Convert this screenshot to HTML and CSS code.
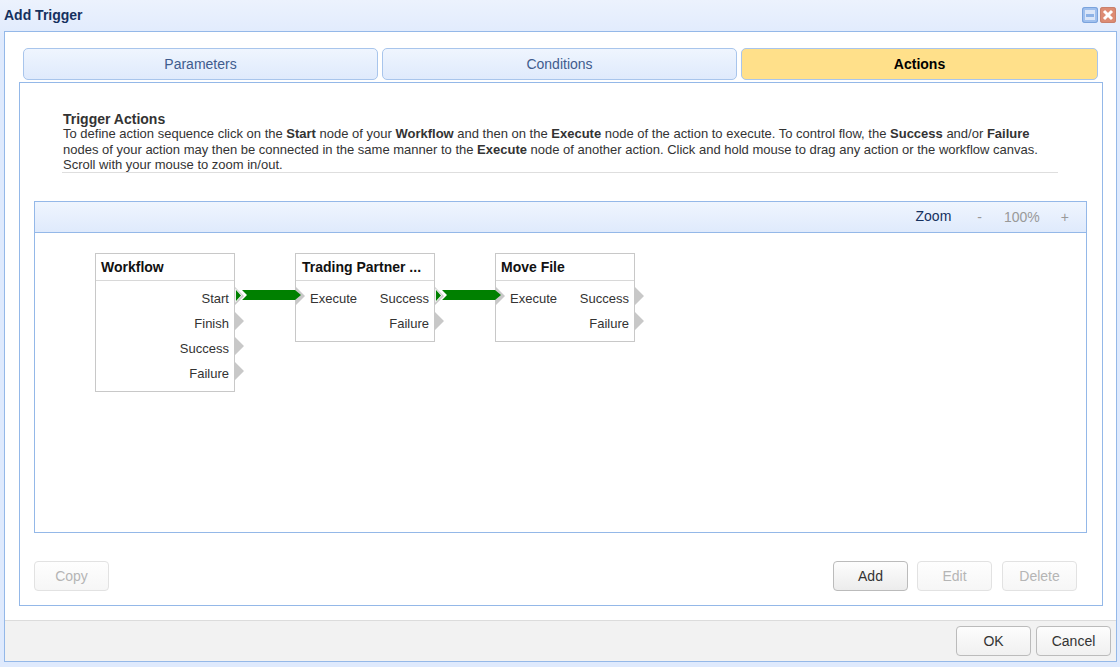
FILE: index.html
```html
<!DOCTYPE html>
<html lang="en">
<head>
<meta charset="utf-8">
<title>Add Trigger</title>
<link rel="stylesheet" href="styles.css">
</head>
<body>
<div class="window">
  <header class="titlebar">
    <span class="title">Add Trigger</span>
    <span class="winbtns">
      <span class="winbtn winbtn-max"><svg width="16" height="16" viewBox="0 0 16 16"><rect x="3" y="3" width="10" height="10" fill="#dbe6f8"/><rect x="4" y="7" width="8" height="3" fill="#8db2e6"/></svg></span>
      <span class="winbtn winbtn-close"><svg width="16" height="16" viewBox="0 0 16 16"><path d="M4 4l8 8M12 4l-8 8" stroke="#fff" stroke-width="3"/></svg></span>
    </span>
  </header>
  <div class="dialog">
    <div class="content">
      <nav class="tabs">
        <div class="tab tab-a">Parameters</div>
        <div class="tab tab-a">Conditions</div>
        <div class="tab tab-c">Actions</div>
      </nav>
      <section class="panel">
        <div class="intro">
          <h2 class="intro-title">Trigger Actions</h2>
          <p class="intro-text">To define action sequence click on the <b>Start</b> node of your <b>Workflow</b> and then on the <b>Execute</b> node of the action to execute. To control flow, the <b>Success</b> and/or <b>Failure</b><br>nodes of your action may then be connected in the same manner to the <b>Execute</b> node of another action. Click and hold mouse to drag any action or the workflow canvas.<br>Scroll with your mouse to zoom in/out.</p>
        </div>
        <div class="designer">
          <div class="toolbar">
            <span class="zoom-label">Zoom</span>
            <span class="zoom-ctl zoom-minus">-</span>
            <span class="zoom-ctl zoom-val">100%</span>
            <span class="zoom-ctl zoom-plus">+</span>
          </div>
          <div class="canvas">
            <svg class="links" width="700" height="200" viewBox="0 0 700 200">
              <g fill="#c8c8c8">
                <path d="M200 54l9 9-9 9zM200 79l9 9-9 9zM200 104l9 9-9 9zM200 129l9 9-9 9z"/>
                <path d="M400 54l9 9-9 9zM400 79l9 9-9 9z"/>
                <path d="M600 54l9 9-9 9zM600 79l9 9-9 9z"/>
                <path d="M261 54l9 9-9 9z"/>
                <path d="M461 54l9 9-9 9z"/>
              </g>
              <g fill="#008000" stroke="#fff" stroke-width="1.4" paint-order="stroke">
                <path d="M201 57l5 5.5-5 5.5z"/>
                <path d="M401 57l5 5.5-5 5.5z"/>
              </g>
              <g fill="#008000">
                <path d="M207 57h53l6 5-6 5h-53l5-5z"/>
                <path d="M407 57h53l6 5-6 5h-53l5-5z"/>
              </g>
            </svg>
            <div class="node node-wf">
              <div class="node-head">Workflow</div>
              <div class="port port-out">Start</div>
              <div class="port port-out">Finish</div>
              <div class="port port-out">Success</div>
              <div class="port port-out">Failure</div>
            </div>
            <div class="node node-tp">
              <div class="node-head node-head-tp">Trading Partner ...</div>
              <div class="port"><span>Execute</span><span>Success</span></div>
              <div class="port port-out">Failure</div>
            </div>
            <div class="node node-mf">
              <div class="node-head">Move File</div>
              <div class="port"><span>Execute</span><span>Success</span></div>
              <div class="port port-out">Failure</div>
            </div>
          </div>
        </div>
        <div class="actions">
          <button class="btn" disabled>Copy</button>
          <span class="spacer"></span>
          <button class="btn btn-on">Add</button>
          <button class="btn" disabled>Edit</button>
          <button class="btn btn-last" disabled>Delete</button>
        </div>
      </section>
    </div>
    <footer class="footer">
      <button class="btn btn-foot">OK</button>
      <button class="btn btn-foot">Cancel</button>
    </footer>
  </div>
</div>
</body>
</html>
```
FILE: styles.css
```css
* { box-sizing: border-box; }
html, body { margin: 0; padding: 0; }
body {
  width: 1120px;
  height: 667px;
  overflow: hidden;
  background: #dfeafd;
  font-family: "Liberation Sans", Arial, sans-serif;
}
.window {
  height: 667px;
  display: flex;
  flex-direction: column;
  padding: 0 3px 5px 4px;
  background: linear-gradient(#ecf2fd, #dfeafd 40px);
}
.titlebar {
  height: 31px;
  flex: none;
  display: flex;
  align-items: center;
  justify-content: space-between;
}
.title {
  font-size: 14px;
  font-weight: bold;
  color: #15315f;
  margin-top: -2px;
}
.winbtns { display: flex; gap: 2px; margin-right: 1px; margin-top: -1px; }
.winbtn {
  width: 16px;
  height: 16px;
  border-radius: 3px;
  display: block;
}
.winbtn svg { display: block; }
.winbtn-max { background: #a0c0ee; box-shadow: inset 0 0 0 1px #7ba3dc; }
.winbtn-close { background: #dd8c74; box-shadow: inset 0 0 0 1px #c9806c; }
.dialog {
  flex: 1;
  display: flex;
  flex-direction: column;
  background: #fff;
  border: 1px solid #94b8e8;
}
.content {
  flex: 1;
  padding: 16px 13px 0 14px;
}
.tabs {
  display: flex;
  gap: 4px;
  padding: 0 4px 0 4px;
  height: 33px;
}
.tab {
  flex: 355px 0 0;
  height: 32px;
  border: 1px solid #a8c5ec;
  border-radius: 5px;
  background: linear-gradient(#eff5fe, #dfeafc);
  font-size: 14px;
  line-height: 30px;
  text-align: center;
  color: #3f5c8e;
}
.tab-c {
  flex-basis: 357px;
  background: #ffe08a;
  color: #000;
  font-weight: bold;
}
.panel {
  margin-top: 1px;
  height: 524px;
  border: 1px solid #94b8e8;
  padding: 0 15px 0 14px;
  display: flex;
  flex-direction: column;
}
.intro {
  height: 90px;
  margin: 0 29px 28px 28px;
  padding: 29px 0 0 1px;
  border-bottom: 1px solid #dedede;
}
.intro-title {
  margin: 0;
  font-size: 14px;
  line-height: 14px;
  font-weight: bold;
  color: #333;
}
.intro-text {
  margin: 0;
  font-size: 13px;
  line-height: 15.5px;
  color: #333;
  white-space: nowrap;
}
.designer {
  height: 332px;
  flex: none;
  border: 1px solid #94b8e8;
  display: flex;
  flex-direction: column;
}
.toolbar {
  height: 31px;
  flex: none;
  display: flex;
  align-items: center;
  border-bottom: 1px solid #94b8e8;
  background: linear-gradient(#eff5fe, #dfeafc);
  font-size: 14px;
}
.zoom-label { margin-left: auto; color: #15315f; margin-top: -2px; }
.zoom-ctl { color: #999; }
.zoom-minus { margin-left: 26px; }
.zoom-val { margin-left: 22px; }
.zoom-plus { margin-left: 21px; margin-right: 17px; }
.canvas { flex: 1; position: relative; overflow: hidden; }
.links { position: absolute; left: 0; top: 0; z-index: 2; pointer-events: none; }
.node {
  position: absolute;
  top: 20px;
  width: 140px;
  border: 1px solid #c8c8c8;
  background: #fff;
  padding-bottom: 5px;
}
.node-wf { left: 60px; }
.node-tp { left: 260px; }
.node-mf { left: 460px; }
.node-head {
  height: 27px;
  line-height: 26px;
  padding-left: 5px;
  margin-bottom: 5px;
  border-bottom: 1px solid #d8d8d8;
  font-size: 14px;
  font-weight: bold;
  color: #111;
  white-space: nowrap;
}
.node-head-tp { padding-left: 6px; }
.port {
  height: 25px;
  line-height: 25px;
  padding: 0 5px 0 14px;
  font-size: 13px;
  color: #333;
  display: flex;
  justify-content: space-between;
}
.port-out { justify-content: flex-end; }
.actions {
  margin-top: 28px;
  display: flex;
  gap: 9px;
  padding-right: 10px;
}
.spacer { flex: 1; }
.btn {
  width: 75px;
  height: 30px;
  padding: 0;
  border: 1px solid #bbb;
  border-radius: 4px;
  background: linear-gradient(#fdfdfd, #ececec);
  font-family: inherit;
  font-size: 14px;
  color: #333;
}
.btn:disabled {
  border-color: #e2e2e2;
  background: linear-gradient(#fefefe, #f6f6f6);
  color: #b5b5b5;
}
.btn-last { margin-left: 1px; }
.footer {
  height: 41px;
  flex: none;
  display: flex;
  justify-content: flex-end;
  align-items: center;
  gap: 5px;
  padding-right: 5px;
  background: #f2f2f2;
  border-top: 1px solid #dcdcdc;
}
.btn-foot { background: linear-gradient(#fdfdfd, #f0f0f0); }
```
